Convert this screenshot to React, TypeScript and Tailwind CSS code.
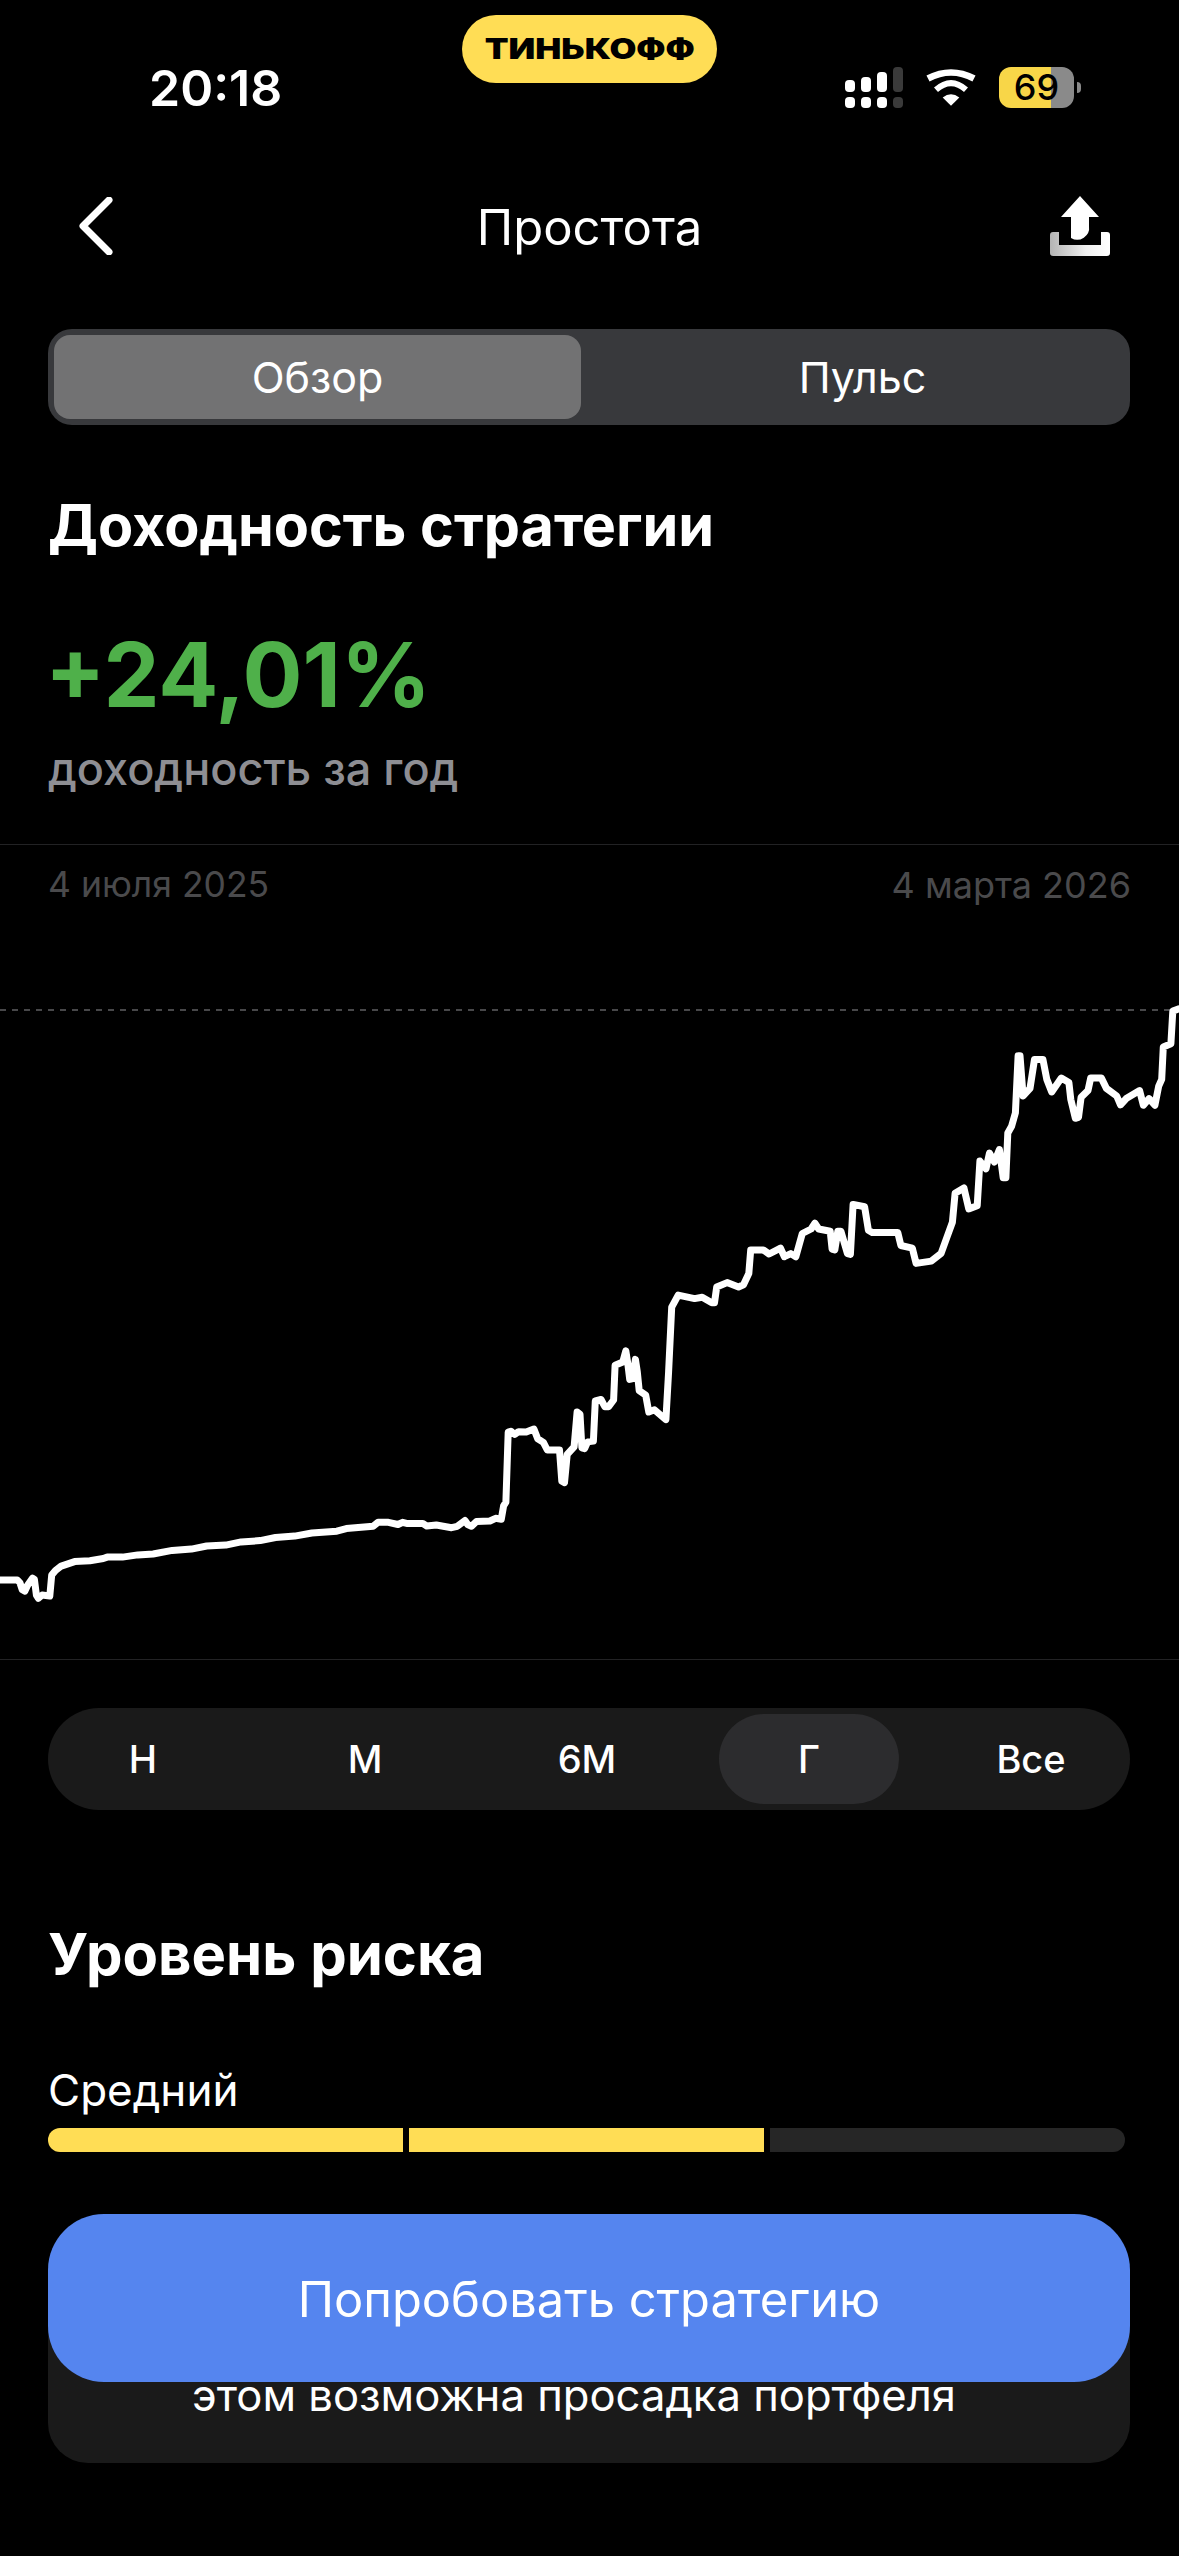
import React from 'react';

// chart points read off the reference, in zoomed crop units
const LEFT_PART: number[][] = [
  [0, 1346], [45, 1346], [52, 1352], [58, 1368], [65, 1371], [72, 1358], [85, 1342], [90, 1345], [95, 1380], [100, 1387],
  [110, 1380], [120, 1381], [130, 1382], [135, 1335], [145, 1325], [160, 1315], [195, 1305], [235, 1303], [270, 1298],
  [280, 1295], [320, 1295], [360, 1290], [400, 1288], [450, 1280], [500, 1277], [540, 1270], [590, 1268], [630, 1261],
  [680, 1258], [720, 1251], [770, 1248], [815, 1241], [880, 1237], [905, 1231], [975, 1226], [988, 1217], [1015, 1217],
  [1040, 1222], [1052, 1217], [1065, 1220], [1105, 1220], [1115, 1225], [1140, 1223], [1180, 1229], [1195, 1226],
  [1215, 1213], [1222, 1222], [1232, 1226], [1245, 1215], [1280, 1214], [1295, 1208], [1310, 1210], [1316, 1180],
  [1322, 1172], [1328, 1015], [1335, 1013], [1345, 1020], [1355, 1014], [1375, 1015], [1395, 1008], [1405, 1030],
  [1420, 1038], [1430, 1055], [1462, 1055], [1468, 1125], [1475, 1128], [1482, 1065], [1500, 1048], [1508, 970],
];

const RIGHT_PART: number[][] = [
  [0, 975], [5, 1050], [12, 1052], [20, 1037], [35, 1035], [40, 945], [55, 942], [65, 958], [75, 958], [88, 943], [92, 865],
  [112, 858], [120, 833], [125, 860], [130, 897], [138, 895], [145, 852], [150, 880], [155, 922], [172, 932], [180, 970],
  [195, 965], [225, 987], [232, 880], [240, 735], [257, 708], [300, 716], [320, 713], [345, 725], [352, 725], [358, 690],
  [385, 680], [415, 690], [428, 685], [442, 660], [447, 607], [480, 607], [495, 616], [525, 603], [535, 622], [552, 615],
  [565, 622], [582, 570], [605, 560], [615, 547], [625, 560], [655, 565], [660, 605], [667, 607], [675, 565], [683, 565],
  [700, 615], [708, 617], [715, 505], [745, 510], [755, 563], [765, 568], [832, 568], [840, 597], [870, 603], [880, 637],
  [920, 632], [945, 615], [960, 580], [975, 545], [982, 480], [1005, 468], [1018, 515], [1040, 508], [1047, 408],
  [1063, 425], [1072, 390], [1085, 410], [1098, 382], [1108, 445], [1115, 445], [1120, 345], [1130, 330], [1140, 300],
  [1147, 172], [1152, 172], [1160, 262], [1178, 245], [1190, 180], [1212, 180], [1222, 225], [1235, 253], [1260, 222],
  [1280, 232], [1285, 270], [1297, 312], [1305, 310], [1312, 265], [1330, 250], [1337, 222], [1365, 222], [1378, 245],
  [1405, 262], [1415, 282], [1430, 268], [1465, 250], [1475, 283], [1490, 268], [1505, 283], [1515, 240], [1523, 225],
  [1527, 152], [1547, 145], [1552, 72], [1568, 67],
];

const chartPoints = [
  ...LEFT_PART.map(([x, y]) => `${(x / 2.613).toFixed(1)},${(980 + y / 2.24).toFixed(1)}`),
  ...RIGHT_PART.map(([x, y]) => `${(580 + x / 2.618).toFixed(1)},${(980 + y / 2.24).toFixed(1)}`),
].join(' ');

const RANGES = ['Н', 'М', '6М', 'Г', 'Все'];

const SignalIcon = () => (
  <svg width="58" height="41" viewBox="0 0 58 41">
    <rect x="0" y="13" width="10" height="12" rx="4" fill="#fff" />
    <rect x="16" y="10" width="10" height="15" rx="4" fill="#fff" />
    <rect x="32" y="5" width="10" height="20" rx="4" fill="#fff" />
    <rect x="48" y="0" width="10" height="25" rx="4" fill="#3a3a3a" />
    <rect x="0" y="30" width="10" height="11" rx="4" fill="#fff" />
    <rect x="16" y="30" width="10" height="11" rx="4" fill="#fff" />
    <rect x="32" y="30" width="10" height="11" rx="4" fill="#fff" />
    <rect x="48" y="30" width="10" height="11" rx="4" fill="#3a3a3a" />
  </svg>
);

const WifiIcon = () => (
  <svg width="50" height="37" viewBox="0 0 150 110" fill="none">
    <path d="M6 28Q75 -8 144 28" stroke="#fff" strokeWidth="20" />
    <path d="M30 62Q75 22 120 62" stroke="#fff" strokeWidth="18" />
    <path d="M75 110L50 85Q75 65 100 85Z" fill="#fff" />
  </svg>
);

const ShareIcon = () => (
  <svg width="60" height="60" viewBox="0 0 60 60">
    <defs>
      <linearGradient id="tray" x1="0" y1="0" x2="1" y2="0">
        <stop offset="0" stopColor="#b4b4b4" />
        <stop offset="0.6" stopColor="#f0f0f0" />
        <stop offset="1" stopColor="#ffffff" />
      </linearGradient>
    </defs>
    <path
      d="M0 39a3 3 0 0 1 3-3h6v13h42V36h6a3 3 0 0 1 3 3v18a3 3 0 0 1-3 3H3a3 3 0 0 1-3-3Z"
      fill="url(#tray)"
    />
    <path d="M30 0L49 21H39V30a12 12 0 0 1-18 12V21H11Z" fill="#fff" />
  </svg>
);

export default function App() {
  return (
    <div className="relative h-[2556px] w-[1179px] overflow-hidden bg-black text-white [font-family:Inter,sans-serif]">
      {/* operator pill sits over the status bar */}
      <div className="absolute left-[462px] top-[15px] flex h-[68px] w-[255px] items-center justify-center rounded-[34px] bg-[#ffdd55]">
        <span className="text-[28px] font-black text-black scale-x-[1.24]">ТИНЬКОФФ</span>
      </div>

      <div className="flex h-[174px] items-center justify-between pl-[149px] pr-[98px]">
        <span className="pt-[2px] text-[50px] font-semibold leading-none">20:18</span>
        <div className="flex items-center gap-[23px]">
          <SignalIcon />
          <WifiIcon />
          <div className="flex items-center gap-[3px]">
            <div className="flex h-[41px] w-[75px] items-center justify-center overflow-hidden rounded-[12px] bg-[linear-gradient(90deg,#f8d648_69%,#8a8a8a_69%)] text-[36px] font-medium text-black">
              69
            </div>
            <div className="h-[11px] w-[4px] rounded-r-[4px] bg-[#8a8a8a]" />
          </div>
        </div>
      </div>

      <div className="grid h-[104px] grid-cols-[1fr_auto_1fr] items-center pl-[79px] pr-[69px]">
        <svg width="34" height="58" viewBox="0 0 34 58" fill="none">
          <path d="M30 3L4 29L30 55" stroke="#fff" strokeWidth="7" strokeLinecap="round" strokeLinejoin="round" />
        </svg>
        <span className="mr-[10px] pt-[2px] text-[49px] leading-none">Простота</span>
        <div className="flex justify-end">
          <ShareIcon />
        </div>
      </div>

      <div className="ml-[48px] mr-[49px] mt-[51px] grid h-[96px] grid-cols-[527px_1fr] rounded-[24px] bg-[#38393c] p-[6px] text-[43px]">
        <div className="flex items-center justify-center rounded-[16px] bg-[#727273]">Обзор</div>
        <div className="flex items-center justify-center pl-[20px]">Пульс</div>
      </div>

      <h2 className="ml-[48px] mt-[66px] text-[57.5px] font-bold leading-[68px]">Доходность стратегии</h2>
      <div className="ml-[45px] mt-[66px] text-[89px] font-bold leading-[100px] text-[#4fb04a]">+24,01%</div>
      <div className="ml-[48px] mt-[19px] text-[45px] font-medium leading-[50px] text-[#8e8e93]">доходность за год</div>

      <section className="mt-[50px] border-y border-[#222224]">
        <div className="flex justify-between px-[48px] pt-[18px] leading-[44px] text-[#4a4a4c]">
          <span className="text-[35.5px]">4 июля 2025</span>
          <span className="text-[36px]">4 марта 2026</span>
        </div>
        <svg className="block" width="1179" height="752" viewBox="0 908 1179 752" fill="none">
          <line x1="0" y1="1011" x2="1179" y2="1011" stroke="#48484a" strokeWidth="2" strokeDasharray="6 6" />
          <polyline points={chartPoints} stroke="#fff" strokeWidth="7" strokeLinejoin="round" strokeLinecap="round" />
        </svg>
      </section>

      <div className="ml-[48px] mr-[49px] mt-[48px] flex h-[102px] items-center gap-[42px] rounded-full bg-[#1a1a1a] pl-[5px] text-[38px] font-medium">
        {RANGES.map(r => (
          <div
            key={r}
            className={`flex h-[90px] w-[180px] shrink-0 items-center justify-center rounded-full ${r === 'Г' ? 'bg-[#2c2c2e]' : ''}`}
          >
            {r}
          </div>
        ))}
      </div>

      <h2 className="ml-[48px] mt-[110px] text-[58px] font-bold leading-[68px]">Уровень риска</h2>
      <div className="ml-[48px] mt-[78px] text-[44px] leading-[48px]">Средний</div>
      <div className="ml-[48px] mt-[14px] flex h-[24px] w-[1077px] gap-[6px]">
        <div className="w-[355px] rounded-l-[12px] bg-[#ffdd55]" />
        <div className="w-[355px] bg-[#ffdd55]" />
        <div className="w-[355px] rounded-r-[12px] bg-[#262626]" />
      </div>

      <div className="ml-[48px] mr-[49px] mt-[78px] flex h-[233px] flex-col items-center justify-end rounded-[40px] bg-[#1a1a1a] pb-[39px] pr-[30px] text-[43.6px] leading-[56px]">
        этом возможна просадка портфеля
      </div>

      {/* floating button over the card */}
      <div className="absolute left-[48px] top-[2214px] flex h-[168px] w-[1082px] items-center justify-center rounded-[56px] bg-[#5585ef] pt-[3px] text-[48.8px]">
        Попробовать стратегию
      </div>
    </div>
  );
}
